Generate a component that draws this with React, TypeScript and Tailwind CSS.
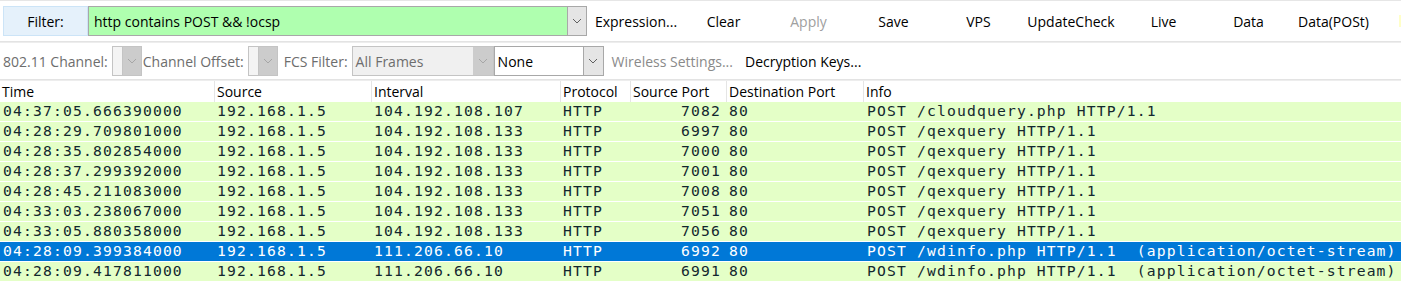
import React from "react";

const ui = { fontFamily: '"Open Sans", "Noto Sans", sans-serif' };
const mono = { fontFamily: '"DejaVu Sans Mono", "Liberation Mono", monospace' };

function Chevron({ color = "#606060" }: { color?: string }) {
  return (
    <svg width="10" height="6" viewBox="0 0 10 6">
      <polyline points="1,1 5,5 9,1" fill="none" stroke={color} strokeWidth="1" />
    </svg>
  );
}

const rows = [
  ["04:37:05.666390000", "192.168.1.5", "104.192.108.107", "HTTP", "7082", "80", "POST /cloudquery.php HTTP/1.1"],
  ["04:28:29.709801000", "192.168.1.5", "104.192.108.133", "HTTP", "6997", "80", "POST /qexquery HTTP/1.1"],
  ["04:28:35.802854000", "192.168.1.5", "104.192.108.133", "HTTP", "7000", "80", "POST /qexquery HTTP/1.1"],
  ["04:28:37.299392000", "192.168.1.5", "104.192.108.133", "HTTP", "7001", "80", "POST /qexquery HTTP/1.1"],
  ["04:28:45.211083000", "192.168.1.5", "104.192.108.133", "HTTP", "7008", "80", "POST /qexquery HTTP/1.1"],
  ["04:33:03.238067000", "192.168.1.5", "104.192.108.133", "HTTP", "7051", "80", "POST /qexquery HTTP/1.1"],
  ["04:33:05.880358000", "192.168.1.5", "104.192.108.133", "HTTP", "7056", "80", "POST /qexquery HTTP/1.1"],
  ["04:28:09.399384000", "192.168.1.5", "111.206.66.10", "HTTP", "6992", "80", "POST /wdinfo.php HTTP/1.1  (application/octet-stream)"],
  ["04:28:09.417811000", "192.168.1.5", "111.206.66.10", "HTTP", "6991", "80", "POST /wdinfo.php HTTP/1.1  (application/octet-stream)"],
];

const cols = [
  { name: "Time", w: "w-[214px]" },
  { name: "Source", w: "w-[157px]" },
  { name: "Interval", w: "w-[189px]" },
  { name: "Protocol", w: "w-[70px]" },
  { name: "Source Port", w: "w-[96px]" },
  { name: "Destination Port", w: "w-[137px]" },
  { name: "Info", w: "flex-1" },
];

function ToolButton({ label, w, disabled }: { label: string; w: string; disabled?: boolean }) {
  return (
    <div className={`${w} h-[30px] flex items-center justify-center text-[14px] ${disabled ? "text-[#a0a0a0]" : "text-black"}`}>
      {label}
    </div>
  );
}

export default function App() {
  return (
    <div className="w-[1401px] h-[297px] bg-white overflow-hidden text-black" style={ui}>
      {/* Filter toolbar */}
      <div className="h-[41px] border-t border-[#e6e6e6] flex items-center pl-[3px] relative">
        <div className="w-[85px] h-[30px] bg-[#e5f1fb] border border-[#cce4f7] flex items-center justify-center text-[14px]">
          Filter:
        </div>
        <div className="w-[499px] h-[30px] flex border border-[#a8a8a8]">
          <div className="flex-1 bg-[#afffaf] flex items-center pl-[5px] text-[14px]">http contains POST &amp;&amp; !ocsp</div>
          <div className="w-[19px] bg-[#e5e5e5] border-l border-[#a8a8a8] flex items-center justify-center">
            <Chevron />
          </div>
        </div>
        <div className="w-[4px]" />
        <ToolButton label="Expression..." w="w-[90px]" />
        <ToolButton label="Clear" w="w-[85px]" />
        <ToolButton label="Apply" w="w-[85px]" disabled />
        <ToolButton label="Save" w="w-[85px]" />
        <ToolButton label="VPS" w="w-[85px]" />
        <ToolButton label="UpdateCheck" w="w-[100px]" />
        <ToolButton label="Live" w="w-[85px]" />
        <ToolButton label="Data" w="w-[85px]" />
        <ToolButton label="Data(POSt)" w="w-[85px]" />
        <div className="flex-1" />
        <div className="w-[2px] h-[12px] bg-[#ffffc8]" />
      </div>
      <div className="h-[1px] bg-[#e3e3e3]" />
      <div className="h-[1px] bg-[#ededed]" />

      {/* Wireless toolbar */}
      <div className="h-[36px] flex items-center pl-[3px] text-[14px]">
        <span className="text-[#6d6d6d]">802.11 Channel:</span>
        <div className="ml-[4px] w-[30px] h-[30px] flex border border-[#c4c4c4]">
          <div className="w-[9px] bg-[#f4f4f4]" />
          <div className="flex-1 bg-[#cccccc] border-l border-[#c4c4c4] flex items-center justify-center">
            <Chevron color="#a6a6a6" />
          </div>
        </div>
        <span className="ml-[1px] text-[#6d6d6d]">Channel Offset:</span>
        <div className="ml-[4px] w-[30px] h-[30px] flex border border-[#c4c4c4]">
          <div className="w-[9px] bg-[#f4f4f4]" />
          <div className="flex-1 bg-[#cccccc] border-l border-[#c4c4c4] flex items-center justify-center">
            <Chevron color="#a6a6a6" />
          </div>
        </div>
        <span className="ml-[6px] text-[#6d6d6d]">FCS Filter:</span>
        <div className="ml-[4px] w-[142px] h-[30px] flex border border-[#c4c4c4]">
          <div className="flex-1 bg-[#f0f0f0] flex items-center pl-[3px] text-[#6d6d6d]">All Frames</div>
          <div className="w-[20px] bg-[#cccccc] flex items-center justify-center">
            <Chevron color="#a6a6a6" />
          </div>
        </div>
        <div className="w-[110px] h-[30px] flex border border-[#a8a8a8]">
          <div className="flex-1 bg-white flex items-center pl-[3px]">None</div>
          <div className="w-[20px] bg-[#e5e5e5] border-l border-[#a8a8a8] flex items-center justify-center">
            <Chevron />
          </div>
        </div>
        <span className="ml-[8px] text-[#8a8a8a]">Wireless Settings...</span>
        <span className="ml-[12px]">Decryption Keys...</span>
      </div>
      <div className="h-[1px] bg-[#e3e3e3]" />
      <div className="h-[1px] bg-[#ededed]" />

      {/* Header */}
      <div className="h-[21px] flex text-[14px] bg-white">
        {cols.map((c, i) => (
          <div key={c.name} className={`${c.w} h-full flex items-center pl-[2px] ${i > 0 ? "border-l border-[#e5e5e5]" : ""}`}>
            {c.name}
          </div>
        ))}
      </div>

      {/* Rows */}
      <div style={mono} className="text-[14.7px] tracking-[1.15px]">
        {rows.map((r, idx) => {
          const sel = idx === 7;
          return (
            <div
              key={idx}
              className={`h-[20px] flex items-center border-b border-white whitespace-pre ${sel ? "bg-[#0078d7] text-white" : "bg-[#e4ffc7] text-[#12272e]"}`}
            >
              <div className="w-[214px] pl-[3px]">{r[0]}</div>
              <div className="w-[157px] pl-[3px]">{r[1]}</div>
              <div className="w-[189px] pl-[3px]">{r[2]}</div>
              <div className="w-[70px] pl-[3px]">{r[3]}</div>
              <div className="w-[96px] pr-[5px] text-right">{r[4]}</div>
              <div className="w-[137px] pl-[3px]">{r[5]}</div>
              <div className="flex-1 pl-[4px]">{r[6]}</div>
            </div>
          );
        })}
      </div>
    </div>
  );
}
